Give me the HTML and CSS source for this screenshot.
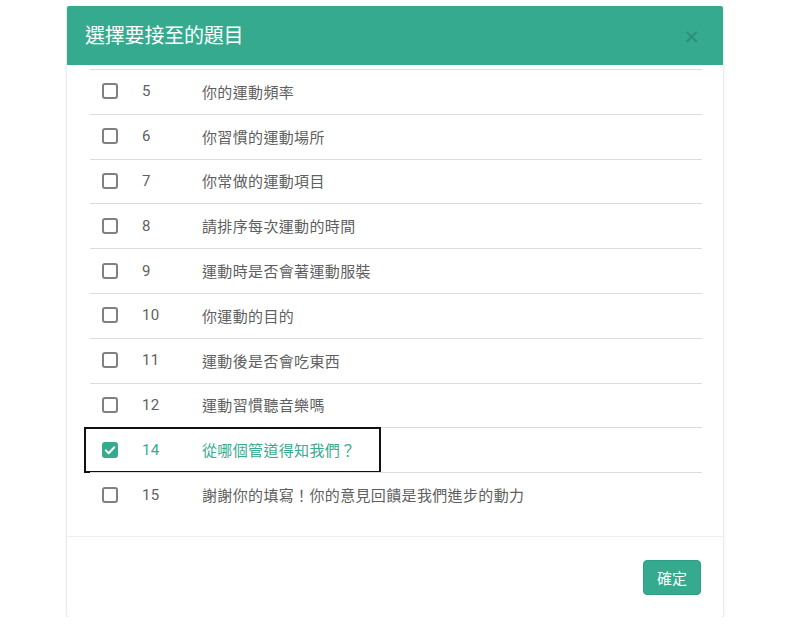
FILE: index.html
```html
<!DOCTYPE html>
<html lang="zh-Hant">
<head>
<meta charset="utf-8">
<title>選擇要接至的題目</title>
<link rel="stylesheet" href="styles.css">
</head>
<body>
<div class="modal">
  <div class="modal-header">
    <h2 class="modal-title">選擇要接至的題目</h2>
    <span class="modal-close">×</span>
  </div>
  <div class="modal-body">
    <ul class="q-list">
      <li class="q-row"><span class="cb"></span><span class="q-num">5</span><span class="q-text">你的運動頻率</span></li>
      <li class="q-row"><span class="cb"></span><span class="q-num">6</span><span class="q-text">你習慣的運動場所</span></li>
      <li class="q-row"><span class="cb"></span><span class="q-num">7</span><span class="q-text">你常做的運動項目</span></li>
      <li class="q-row"><span class="cb"></span><span class="q-num">8</span><span class="q-text">請排序每次運動的時間</span></li>
      <li class="q-row"><span class="cb"></span><span class="q-num">9</span><span class="q-text">運動時是否會著運動服裝</span></li>
      <li class="q-row"><span class="cb"></span><span class="q-num">10</span><span class="q-text">你運動的目的</span></li>
      <li class="q-row"><span class="cb"></span><span class="q-num">11</span><span class="q-text">運動後是否會吃東西</span></li>
      <li class="q-row"><span class="cb"></span><span class="q-num">12</span><span class="q-text">運動習慣聽音樂嗎</span></li>
      <li class="q-row is-selected">
        <span class="cb cb-checked"><svg viewBox="0 0 16 16" width="16" height="16"><path d="M3.8 8.4 L6.7 11.2 L12.3 5.2" fill="none" stroke="#fff" stroke-width="2" stroke-linecap="round" stroke-linejoin="round"/></svg></span>
        <span class="q-num">14</span><span class="q-text">從哪個管道得知我們？</span>
        <span class="tour-highlight"></span>
      </li>
      <li class="q-row"><span class="cb"></span><span class="q-num">15</span><span class="q-text">謝謝你的填寫！你的意見回饋是我們進步的動力</span></li>
    </ul>
  </div>
  <div class="modal-footer">
    <button class="btn-confirm">確定</button>
  </div>
</div>
</body>
</html>
```

FILE: styles.css
```css
* { box-sizing: border-box; }

body {
  margin: 0;
  background: #fff;
  font-family: Roboto, "Noto Sans CJK TC", "Noto Sans", sans-serif;
  padding: 6px 0 0 67px;
}

.modal {
  width: 656px;
  background: #fff;
  border-radius: 2px;
  box-shadow: 0 1px 3px rgba(0,0,0,0.18), 0 0 1px rgba(0,0,0,0.12);
}

.modal-header {
  height: 59px;
  background: #36aa8f;
  display: flex;
  align-items: center;
  justify-content: space-between;
  padding: 0 23px 0 18px;
  border-radius: 2px 2px 0 0;
}

.modal-title {
  margin: 0;
  color: #fff;
  font-size: 20px;
  font-weight: 400;
  line-height: 1;
  letter-spacing: -0.2px;
}

.modal-close {
  color: #1f6a5a;
  opacity: 0.45;
  font-size: 20px;
  line-height: 1;
  font-family: "DejaVu Sans", sans-serif;
}

.modal-body {
  padding: 4px 21px 19px 23px;
}

.q-list {
  list-style: none;
  margin: 0;
  padding: 0;
}

.q-row {
  position: relative;
  height: 44.8px;
  border-top: 1px solid #dcdcdc;
  display: flex;
  align-items: center;
  padding-left: 12px;
  padding-bottom: 1px;
  font-size: 15px;
  color: #5f5f5f;
}

.cb {
  width: 16px;
  height: 16px;
  border: 2px solid #808080;
  border-radius: 3px;
  flex: none;
  display: flex;
  align-items: center;
  justify-content: center;
}

.cb-checked {
  background: #36aa8f;
  border-color: #36aa8f;
}

.cb-checked svg {
  display: block;
  flex: none;
}

.q-num {
  flex: none;
  width: 84px;
  padding-left: 24px;
  letter-spacing: 0.3px;
}

.q-text {
  white-space: nowrap;
  letter-spacing: 0.35px;
}

.is-selected {
  color: #36aa8f;
}

.tour-highlight {
  position: absolute;
  left: -6px;
  top: -1px;
  width: 297px;
  height: 46px;
  border: 2px solid #111;
  pointer-events: none;
}

.modal-footer {
  border-top: 1px solid #efefef;
  height: 81px;
  display: flex;
  justify-content: flex-end;
  align-items: flex-start;
  padding: 23px 22px 0 0;
}

.btn-confirm {
  width: 58px;
  height: 35px;
  background: #36aa8f;
  color: #fff;
  border: 1px solid #2f9e84;
  border-radius: 4px;
  font-family: Roboto, "Noto Sans CJK TC", sans-serif;
  font-size: 15px;
  padding: 0;
}
```
